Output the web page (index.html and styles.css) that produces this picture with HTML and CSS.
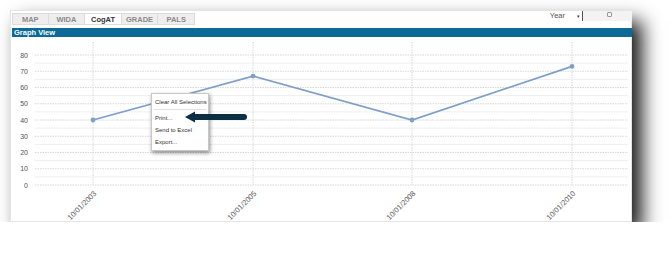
FILE: index.html
```html
<!DOCTYPE html>
<html lang="en">
<head>
  <meta charset="UTF-8">
  <meta name="viewport" content="width=device-width, initial-scale=1.0">
  <title>Graph View</title>
  <link rel="stylesheet" href="styles.css">
</head>
<body>
  <div class="window">
    <div class="top">
      <div class="tabs">
        <div class="tab">MAP</div>
        <div class="tab">WIDA</div>
        <div class="tab active">CogAT</div>
        <div class="tab">GRADE</div>
        <div class="tab">PALS</div>
      </div>
      <div class="year">
        <span class="year-label">Year</span>
        <span class="year-arrow">&#9662;</span>
        <div class="year-box"><span class="year-icon"></span></div>
      </div>
    </div>
    <div class="bar">Graph View</div>

    <svg class="chart" width="622" height="185" viewBox="0 0 622 185">
      <g class="minor">
        <line x1="25" x2="618" y1="139.9" y2="139.9"/>
        <line x1="25" x2="618" y1="123.6" y2="123.6"/>
        <line x1="25" x2="618" y1="107.4" y2="107.4"/>
        <line x1="25" x2="618" y1="91.1" y2="91.1"/>
        <line x1="25" x2="618" y1="74.9" y2="74.9"/>
        <line x1="25" x2="618" y1="58.6" y2="58.6"/>
        <line x1="25" x2="618" y1="42.4" y2="42.4"/>
        <line x1="25" x2="618" y1="26.1" y2="26.1"/>
      </g>
      <g class="major">
        <line x1="25" x2="618" y1="148" y2="148"/>
        <line x1="25" x2="618" y1="131.75" y2="131.75"/>
        <line x1="25" x2="618" y1="115.5" y2="115.5"/>
        <line x1="25" x2="618" y1="99.25" y2="99.25"/>
        <line x1="25" x2="618" y1="83" y2="83"/>
        <line x1="25" x2="618" y1="66.75" y2="66.75"/>
        <line x1="25" x2="618" y1="50.5" y2="50.5"/>
        <line x1="25" x2="618" y1="34.25" y2="34.25"/>
        <line x1="25" x2="618" y1="18" y2="18"/>
        <line x1="83" x2="83" y1="5" y2="148"/>
        <line x1="243" x2="243" y1="5" y2="148"/>
        <line x1="402" x2="402" y1="5" y2="148"/>
        <line x1="562" x2="562" y1="5" y2="148"/>
      </g>
      <g class="ylabels">
        <text x="18" y="150.5">0</text>
        <text x="18" y="134.2">10</text>
        <text x="18" y="118">20</text>
        <text x="18" y="101.7">30</text>
        <text x="18" y="85.5">40</text>
        <text x="18" y="69.2">50</text>
        <text x="18" y="53">60</text>
        <text x="18" y="36.7">70</text>
        <text x="18" y="20.5">80</text>
      </g>
      <g class="xlabels">
        <text transform="translate(87 157) rotate(-45)">10/01/2003</text>
        <text transform="translate(247 157) rotate(-45)">10/01/2005</text>
        <text transform="translate(406 157) rotate(-45)">10/01/2008</text>
        <text transform="translate(566 157) rotate(-45)">10/01/2010</text>
      </g>
      <polyline class="series" points="83,83 243,39.1 402,83 562,29.4"/>
      <g class="dots">
        <circle cx="83" cy="83" r="2.4"/>
        <circle cx="243" cy="39.1" r="2.4"/>
        <circle cx="402" cy="83" r="2.4"/>
        <circle cx="562" cy="29.4" r="2.4"/>
      </g>
    </svg>

    <div class="menu">
      <div class="menu-item">Clear All Selections</div>
      <div class="menu-sep"></div>
      <div class="menu-item">Print...</div>
      <div class="menu-item">Send to Excel</div>
      <div class="menu-item">Export...</div>
    </div>

    <svg class="pointer" width="62" height="12" viewBox="0 0 62 12">
      <path d="M0 6 L10 0.5 L10 3 L59 3 Q62 3 62 6 Q62 9 59 9 L10 9 L10 11.5 Z"/>
    </svg>
  </div>
</body>
</html>
```

FILE: styles.css
```css
* {
  margin: 0;
  padding: 0;
  box-sizing: border-box;
}
html, body {
  background: #fff;
}
body {
  font-family: "Liberation Sans", Arial, sans-serif;
}

.window {
  position: relative;
  width: 622px;
  height: 212px;
  margin: 10px 0 0 10px;
  background: #fff;
  box-shadow: inset 0 0 0 1px #e4e4e4, 10px 11px 18px rgba(0, 0, 0, 0.9);
}

.top {
  display: flex;
  height: 17px;
  padding: 3px 0 0 2px;
}
.tabs {
  display: flex;
}
.tab {
  width: 36.6px;
  height: 12px;
  border: 1px solid #dcdcdc;
  border-left: none;
  background: #eeeeee;
  color: #8a8a8a;
  font-size: 7.5px;
  font-weight: bold;
  line-height: 11px;
  text-align: center;
}
.tab:first-child {
  border-left: 1px solid #dcdcdc;
}
.tab.active {
  background: #fff;
  color: #333;
}

.year {
  display: flex;
  align-items: flex-start;
  margin-left: auto;
  margin-top: -2px;
}
.year-label {
  font-size: 7.5px;
  color: #555;
  line-height: 10px;
  margin-right: 12px;
}
.year-arrow {
  font-size: 5px;
  color: #333;
  line-height: 10px;
  margin-right: 2px;
}
.year-box {
  display: flex;
  justify-content: center;
  width: 50px;
  height: 10px;
  background: #f3f3f3;
  border-left: 1px solid #555;
}
.year-icon {
  width: 5px;
  height: 5px;
  margin-top: 1px;
  margin-left: 4px;
  border: 1px solid #999;
  border-radius: 1px;
}

.bar {
  height: 9px;
  margin: 1px 0 0 2px;
  background: #0b6b96;
  color: #fff;
  font-size: 7.5px;
  font-weight: bold;
  line-height: 9px;
  padding-left: 2px;
}

.chart {
  display: block;
}
.minor line {
  stroke: #efefef;
  stroke-width: 1;
}
.major line {
  stroke: #d8d8d8;
  stroke-width: 1;
  stroke-dasharray: 1.5 1;
}
.ylabels text {
  font-size: 7px;
  fill: #555;
  text-anchor: end;
}
.xlabels text {
  font-size: 7.5px;
  fill: #5a5a5a;
  text-anchor: end;
}
.series {
  fill: none;
  stroke: #7f9fc9;
  stroke-width: 1.8;
}
.dots circle {
  fill: #7f9fc9;
}

.menu {
  position: absolute;
  left: 141px;
  top: 83px;
  width: 58px;
  padding: 2px 0;
  background: #fff;
  border: 1px solid #c8c8c8;
  box-shadow: 1px 2px 4px rgba(0, 0, 0, 0.45);
}
.menu-item {
  height: 12px;
  line-height: 12px;
  padding-left: 3px;
  font-size: 6px;
  color: #333;
  white-space: nowrap;
}
.menu-sep {
  height: 1px;
  margin: 1px 2px 2px;
  background: #e2e2e2;
}

.pointer {
  position: absolute;
  left: 175px;
  top: 101px;
}
.pointer path {
  fill: #0c2f45;
}
```
